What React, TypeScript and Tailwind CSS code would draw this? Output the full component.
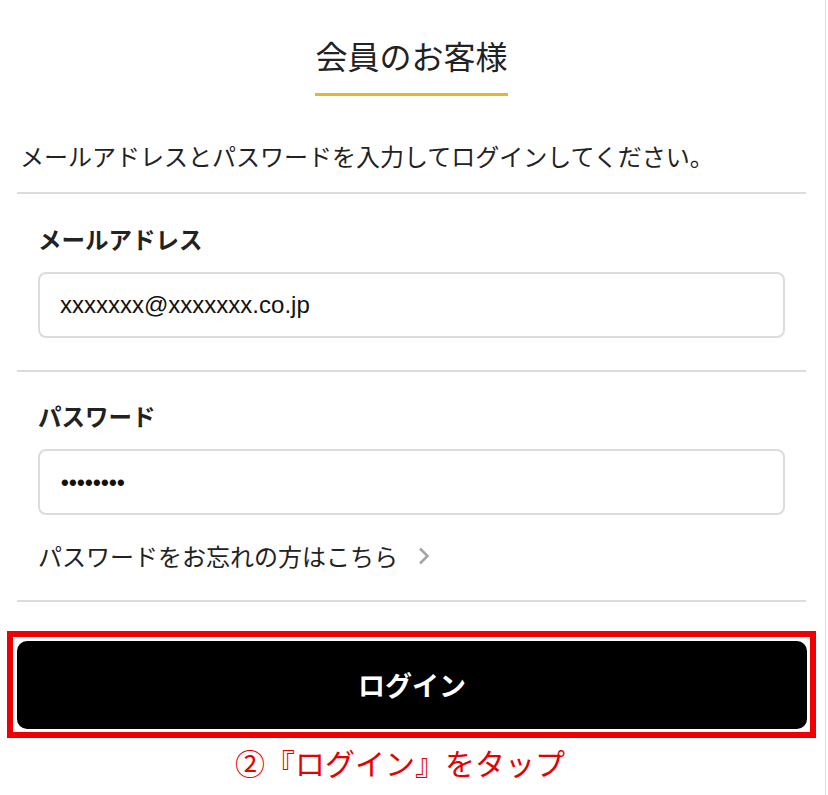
import React from "react";

function Chevron() {
  return (
    <svg width="12" height="18" viewBox="0 0 12 18" className="ml-[20px] shrink-0">
      <polyline points="2,1.5 9.5,9 2,16.5" fill="none" stroke="#a6a6a6" strokeWidth="2.6" />
    </svg>
  );
}

export default function App() {
  return (
    <div className="w-[826px] min-h-[795px] border-r border-[#dedede] bg-white pl-[17px] pr-[19px] font-['Noto_Sans_CJK_JP',sans-serif] text-[#222]">
      <div className="pt-[31px] text-center">
        <h1 className="inline-block border-b-[3px] border-[#e6b630] pb-[14px] text-[32px] leading-[48px] font-normal">
          会員のお客様
        </h1>
      </div>

      <p className="mt-[43px] ml-[3px] text-[24px] leading-[34px] whitespace-nowrap">
        メールアドレスとパスワードを入力してログインしてください。
      </p>

      <section className="mt-[19px] border-t-2 border-[#dcdcdc] px-[21px] pt-[29px] pb-[32px]">
        <label className="block text-[23.5px] leading-[32px] font-bold">メールアドレス</label>
        <div className="mt-[17px] flex h-[66px] items-center rounded-[8px] border-2 border-[#dcdcdc] pl-[20px]">
          <span className="font-['Liberation_Sans',sans-serif] text-[24px] text-[#111]">xxxxxxx@xxxxxxx.co.jp</span>
        </div>
      </section>

      <section className="border-t-2 border-[#dcdcdc] px-[21px] pt-[28px] pb-[27px]">
        <label className="block text-[23.5px] leading-[32px] font-bold">パスワード</label>
        <div className="mt-[17px] flex h-[66px] items-center rounded-[8px] border-2 border-[#dcdcdc] pl-[21px]">
          <span className="font-['Liberation_Sans',sans-serif] text-[22px] font-bold tracking-[0.3px] text-[#111]">••••••••</span>
        </div>
        <a className="mt-[24px] flex items-center text-[24px] leading-[34px] text-[#222]">
          パスワードをお忘れの方はこちら
          <Chevron />
        </a>
      </section>

      <section className="border-t-2 border-[#dcdcdc] pt-[29px]">
        <div className="-ml-[10px] -mr-[10px] border-[6px] border-[#f00000] pt-[4px] pl-[4px] pr-[3px] pb-[3px]">
          <button className="flex h-[88px] w-full items-center justify-center rounded-[10px] bg-black text-[27px] font-bold text-white">
            ログイン
          </button>
        </div>
        <p className="mt-[4px] mr-[23px] text-center text-[30px] leading-[40px] text-[#e60000]">
          ②『ログイン』をタップ
        </p>
      </section>
    </div>
  );
}
